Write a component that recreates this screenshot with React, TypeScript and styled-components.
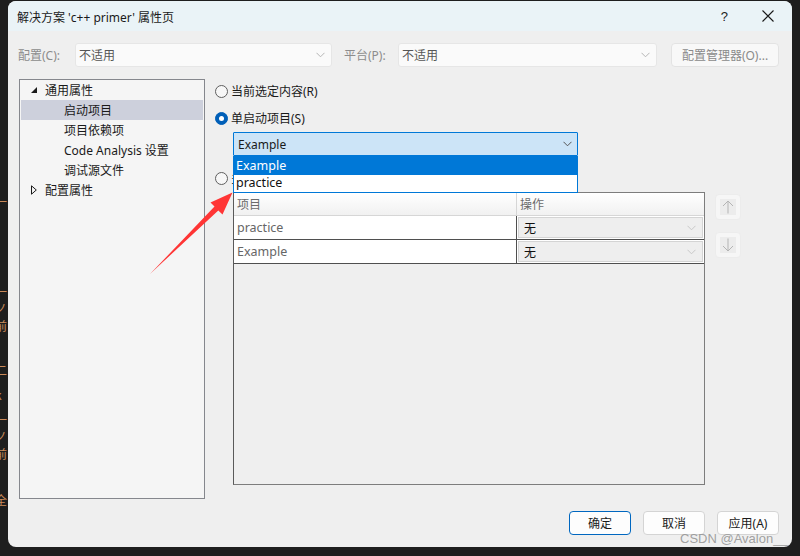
import React from "react";
import styled, { createGlobalStyle, css } from "styled-components";

const Global = createGlobalStyle`
  html, body { margin: 0; padding: 0; background: #1e1e1e; }
  body {
    font-family: "Noto Sans", "Noto Sans CJK SC", sans-serif;
    font-size: 12px;
    color: #1a1a1a;
  }
  #root { width: 800px; height: 556px; overflow: hidden; }
`;

const Page = styled.div`
  position: relative;
  display: flex;
  align-items: flex-start;
  width: 800px;
  height: 556px;
  padding-top: 1px;
  box-sizing: border-box;
  background: #1e1e1e;
  overflow: hidden;
`;

const CodeStrip = styled.div`
  width: 8px;
  height: 546px;
  overflow: hidden;
  display: flex;
  flex-direction: column;
  flex-shrink: 0;
`;

const CodeGlyph = styled.span<{ $gap: number; $blue?: boolean }>`
  display: block;
  margin-top: ${(p) => p.$gap}px;
  margin-left: -5px;
  height: 16px;
  line-height: 16px;
  font-size: 12px;
  font-family: "Noto Sans CJK SC", sans-serif;
  color: ${(p) => (p.$blue ? "#9cdcfe" : "#c98a5a")};
  white-space: nowrap;
`;

const Dialog = styled.div`
  width: 784px;
  height: 546px;
  flex-shrink: 0;
  background: #efefef;
  border-radius: 8px;
  overflow: hidden;
  display: flex;
  flex-direction: column;
`;

const TitleBar = styled.div`
  height: 30px;
  display: flex;
  align-items: center;
  padding: 0 18px 0 9px;
  background: #eaf3f7;
`;

const Title = styled.div`
  font-size: 12px;
  color: #1a1a1a;
  padding-top: 1px;
`;

const TitleButtons = styled.div`
  margin-left: auto;
  display: flex;
  align-items: center;
  gap: 34px;
`;

const HelpGlyph = styled.span`
  font-size: 13px;
  color: #222;
  font-family: "Liberation Sans", sans-serif;
`;

const ConfigRow = styled.div`
  display: flex;
  align-items: center;
  height: 24px;
  margin-top: 12px;
  padding-left: 10px;
`;

const FieldLabel = styled.span<{ $w: number; $ml?: number }>`
  width: ${(p) => p.$w}px;
  margin-left: ${(p) => p.$ml ?? 0}px;
  color: #8c8c8c;
  flex-shrink: 0;
`;

const ConfigCombo = styled.div<{ $w: number }>`
  width: ${(p) => p.$w}px;
  height: 24px;
  box-sizing: border-box;
  display: flex;
  align-items: center;
  padding: 0 6px 0 3px;
  background: #fafafa;
  border: 1px solid #e6e6e6;
  border-radius: 3px;
  color: #555;
  flex-shrink: 0;
`;

const Grow = styled.span`
  flex: 1;
`;

const ManagerButton = styled.div`
  width: 108px;
  height: 24px;
  margin-left: 14px;
  box-sizing: border-box;
  display: flex;
  align-items: center;
  justify-content: center;
  background: #f8f8f8;
  border: 1px solid #e3e3e3;
  border-radius: 4px;
  color: #8a8a8a;
`;

const Main = styled.div`
  display: flex;
  height: 420px;
  margin-top: 12px;
  padding-left: 11px;
`;

const Tree = styled.div`
  width: 186px;
  height: 420px;
  box-sizing: border-box;
  border: 1px solid #85878d;
  background: #f5f5f5;
  display: flex;
  flex-direction: column;
`;

const TreeRow = styled.div<{ $level: number; $selected?: boolean }>`
  height: 20px;
  display: flex;
  align-items: center;
  margin: 0 1px;
  padding-left: ${(p) => (p.$level === 0 ? 10 : 43)}px;
  background: ${(p) => (p.$selected ? "#cdd0dc" : "transparent")};
  color: #1a1a1a;
`;

const Twisty = styled.span`
  width: 14px;
  display: flex;
  align-items: center;
`;

const Pane = styled.div`
  margin-left: 10px;
  display: flex;
  flex-direction: column;
`;

const RadioRow = styled.label<{ $mt: number }>`
  display: flex;
  align-items: center;
  height: 20px;
  margin-top: ${(p) => p.$mt}px;
  gap: 3px;
`;

const RadioDot = styled.span<{ $checked?: boolean }>`
  width: 13px;
  height: 13px;
  box-sizing: border-box;
  border-radius: 50%;
  display: flex;
  align-items: center;
  justify-content: center;
  ${(p) =>
    p.$checked
      ? css`
          background: #005fb8;
          border: 1px solid #005fb8;
          &::after {
            content: "";
            width: 5px;
            height: 5px;
            border-radius: 50%;
            background: #fff;
          }
        `
      : css`
          background: #f7f7f7;
          border: 1px solid #5f5f5f;
        `}
`;

const ComboWrap = styled.div`
  position: relative;
  z-index: 5;
  margin: 4px 0 0 18px;
  width: 345px;
`;

const OpenCombo = styled.div`
  height: 24px;
  box-sizing: border-box;
  display: flex;
  align-items: center;
  padding: 0 5px 0 4px;
  background: #cce4f7;
  border: 1px solid #0078d7;
  border-radius: 1px;
  color: #1a1a1a;
`;

const DropList = styled.div`
  position: absolute;
  left: 0;
  right: 0;
  top: 24px;
  box-sizing: border-box;
  border: 1px solid #0078d7;
  border-top: none;
  background: #fff;
`;

const DropItem = styled.div<{ $active?: boolean }>`
  height: 19px;
  line-height: 19px;
  padding-left: 2px;
  font-size: 12.5px;
  background: ${(p) => (p.$active ? "#0078d7" : "#fff")};
  color: ${(p) => (p.$active ? "#fff" : "#111")};
  &:last-child {
    height: 17px;
    line-height: 16px;
  }
`;

const TableArea = styled.div`
  display: flex;
  align-items: flex-start;
  margin: 4px 0 0 18px;
`;

const Table = styled.div`
  width: 472px;
  height: 293px;
  box-sizing: border-box;
  border: 1px solid #7d7d7d;
  border-left-color: #5a5a5a;
  background: #efefef;
  display: flex;
  flex-direction: column;
`;

const HeaderRow = styled.div`
  display: grid;
  grid-template-columns: 282px 1fr;
  height: 22px;
  background: linear-gradient(#ffffff, #f1f1f1);
  border-bottom: 1px solid #d6d6d6;
`;

const HeaderCell = styled.div`
  display: flex;
  align-items: center;
  padding-left: 3px;
  color: #6b6b6b;
  & + & {
    border-left: 1px solid #d6d6d6;
  }
`;

const BodyRow = styled.div`
  display: grid;
  grid-template-columns: 282px 1fr;
  height: 24px;
  box-sizing: border-box;
  border-bottom: 1px solid #4f4f4f;
`;

const NameCell = styled.div`
  display: flex;
  align-items: center;
  padding-left: 3px;
  background: #fff;
  color: #666;
  font-size: 12.5px;
`;

const ActionCell = styled.div`
  border-left: 1px solid #4f4f4f;
  background: #fff;
  padding: 1px;
  display: flex;
`;

const ActionCombo = styled.div`
  flex: 1;
  box-sizing: border-box;
  display: flex;
  align-items: center;
  padding: 0 6px 0 5px;
  background: #eeeeee;
  border: 1px solid #d4d4d4;
  color: #111;
`;

const SideButtons = styled.div`
  display: flex;
  flex-direction: column;
  gap: 12px;
  margin: 2px 0 0 10px;
`;

const MoveButton = styled.div`
  width: 26px;
  height: 26px;
  box-sizing: border-box;
  border-radius: 4px;
  border: 1px solid #ececec;
  background: #f6f6f6;
  display: flex;
  align-items: center;
  justify-content: center;
`;

const MoveInner = styled.div`
  width: 16px;
  height: 16px;
  background: #ececec;
  display: flex;
  align-items: center;
  justify-content: center;
`;

const Footer = styled.div`
  display: flex;
  justify-content: flex-end;
  gap: 12px;
  margin-top: 12px;
  padding-right: 13px;
`;

const DialogButton = styled.div<{ $primary?: boolean }>`
  width: 62px;
  height: 24px;
  box-sizing: border-box;
  display: flex;
  align-items: center;
  justify-content: center;
  border-radius: 4px;
  background: #fdfdfd;
  border: 1px solid ${(p) => (p.$primary ? "#0067c0" : "#d4d4d4")};
  color: #1a1a1a;
`;

const RightStrip = styled.div`
  flex: 1;
  height: 556px;
`;

const Annotation = styled.svg`
  position: absolute;
  left: 0;
  top: 0;
  width: 800px;
  height: 556px;
  pointer-events: none;
  z-index: 10;
`;

const Watermark = styled.div`
  position: absolute;
  left: 680px;
  top: 531px;
  height: 18px;
  line-height: 16px;
  font-family: "Liberation Sans", Arial, sans-serif;
  font-size: 13px;
  color: rgba(150, 150, 150, 0.9);
  z-index: 11;
  white-space: nowrap;
`;

const Chevron = ({ color = "#9a9a9a" }: { color?: string }) => (
  <svg width="9" height="6" viewBox="0 0 9 6">
    <path d="M0.5 0.8 L4.5 4.8 L8.5 0.8" fill="none" stroke={color} strokeWidth="1" />
  </svg>
);

const codeLines: { gap: number; ch: string; blue?: boolean }[] = [
  { gap: 157, ch: "ɪ" },
  { gap: 20, ch: "一" },
  { gap: 74, ch: "一" },
  { gap: 0, ch: "ノ" },
  { gap: 2, ch: "前" },
  { gap: 28, ch: "二" },
  { gap: 9, ch: "k" },
  { gap: 9, ch: "一" },
  { gap: 0, ch: "ノ" },
  { gap: 2, ch: "前" },
  { gap: 30, ch: "全" },
  { gap: 9, ch: "t", blue: true },
];

export default function App() {
  return (
    <>
      <Global />
      <Page>
        <CodeStrip>
          {codeLines.map((l, i) => (
            <CodeGlyph key={i} $gap={l.gap} $blue={l.blue}>
              {l.ch}
            </CodeGlyph>
          ))}
        </CodeStrip>
        <Dialog>
          <TitleBar>
            <Title>解决方案 'c++ primer' 属性页</Title>
            <TitleButtons>
              <HelpGlyph>?</HelpGlyph>
              <svg width="12" height="12" viewBox="0 0 12 12">
                <path d="M0.5 0.5 L11.5 11.5 M11.5 0.5 L0.5 11.5" stroke="#1a1a1a" strokeWidth="1.1" />
              </svg>
            </TitleButtons>
          </TitleBar>
          <ConfigRow>
            <FieldLabel $w={57}>配置(C):</FieldLabel>
            <ConfigCombo $w={257}>
              <Grow>不适用</Grow>
              <Chevron color="#b5b5b5" />
            </ConfigCombo>
            <FieldLabel $w={54} $ml={12}>平台(P):</FieldLabel>
            <ConfigCombo $w={259}>
              <Grow>不适用</Grow>
              <Chevron color="#b5b5b5" />
            </ConfigCombo>
            <ManagerButton>配置管理器(O)...</ManagerButton>
          </ConfigRow>
          <Main>
            <Tree>
              <TreeRow $level={0}>
                <Twisty>
                  <svg width="6" height="6" viewBox="0 0 6 6">
                    <path d="M6 0 L6 6 L0 6 Z" fill="#1a1a1a" />
                  </svg>
                </Twisty>
                通用属性
              </TreeRow>
              <TreeRow $level={1} $selected>启动项目</TreeRow>
              <TreeRow $level={1}>项目依赖项</TreeRow>
              <TreeRow $level={1}>Code Analysis 设置</TreeRow>
              <TreeRow $level={1}>调试源文件</TreeRow>
              <TreeRow $level={0}>
                <Twisty>
                  <svg width="6" height="10" viewBox="0 0 6 10">
                    <path d="M0.5 0.8 L5.3 5 L0.5 9.2 Z" fill="none" stroke="#1a1a1a" strokeWidth="1" />
                  </svg>
                </Twisty>
                配置属性
              </TreeRow>
            </Tree>
            <Pane>
              <RadioRow $mt={2}>
                <RadioDot />
                当前选定内容(R)
              </RadioRow>
              <RadioRow $mt={7}>
                <RadioDot $checked />
                单启动项目(S)
              </RadioRow>
              <ComboWrap>
                <OpenCombo>
                  <Grow>Example</Grow>
                  <Chevron color="#555" />
                </OpenCombo>
                <DropList>
                  <DropItem $active>Example</DropItem>
                  <DropItem>practice</DropItem>
                </DropList>
              </ComboWrap>
              <RadioRow $mt={12}>
                <RadioDot />
                多启动项目(U)
              </RadioRow>
              <TableArea>
                <Table>
                  <HeaderRow>
                    <HeaderCell>项目</HeaderCell>
                    <HeaderCell>操作</HeaderCell>
                  </HeaderRow>
                  {["practice", "Example"].map((name) => (
                    <BodyRow key={name}>
                      <NameCell>{name}</NameCell>
                      <ActionCell>
                        <ActionCombo>
                          <Grow>无</Grow>
                          <Chevron color="#c8c8c8" />
                        </ActionCombo>
                      </ActionCell>
                    </BodyRow>
                  ))}
                </Table>
                <SideButtons>
                  <MoveButton>
                    <MoveInner>
                      <svg width="12" height="14" viewBox="0 0 12 14">
                        <path d="M6 13.5 V1 M1 6 L6 1 L11 6" fill="none" stroke="#b4b4b4" strokeWidth="1" />
                      </svg>
                    </MoveInner>
                  </MoveButton>
                  <MoveButton>
                    <MoveInner>
                      <svg width="12" height="14" viewBox="0 0 12 14">
                        <path d="M6 0.5 V13 M1 8 L6 13 L11 8" fill="none" stroke="#b4b4b4" strokeWidth="1" />
                      </svg>
                    </MoveInner>
                  </MoveButton>
                </SideButtons>
              </TableArea>
            </Pane>
          </Main>
          <Footer>
            <DialogButton $primary>确定</DialogButton>
            <DialogButton>取消</DialogButton>
            <DialogButton>应用(A)</DialogButton>
          </Footer>
        </Dialog>
        <RightStrip />
        <Annotation viewBox="0 0 800 556">
          <polygon
            points="150,274 214.5,206.6 210.5,202.5 232.5,192.5 222.5,214.5 218.3,210.5"
            fill="#ff3535"
          />
        </Annotation>
        <Watermark>CSDN @Avalon__</Watermark>
      </Page>
    </>
  );
}
